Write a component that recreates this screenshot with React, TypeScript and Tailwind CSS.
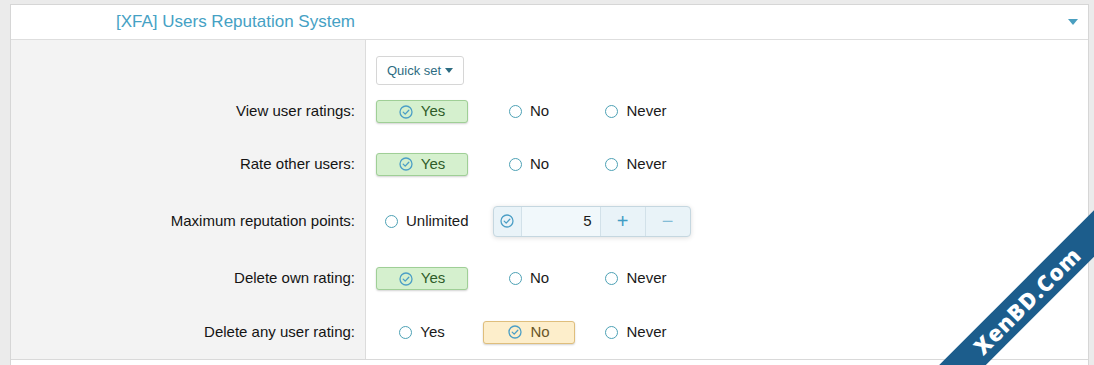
import type { ReactNode } from 'react'

function CheckCircle() {
  return (
    <svg width="14" height="14" viewBox="0 0 14 14" fill="none" className="shrink-0">
      <circle cx="7" cy="7" r="6" stroke="#4c9fc6" strokeWidth="1.3" />
      <path d="M4.2 7.1 L6.2 9.1 L9.8 5.2" stroke="#4c9fc6" strokeWidth="1.3" strokeLinecap="round" strokeLinejoin="round" />
    </svg>
  )
}

function Radio() {
  return <span className="h-[13px] w-[13px] shrink-0 rounded-full border-[1.5px] border-[#4da1b5] bg-white" />
}

type Opt = { text: string; state?: 'green' | 'orange' }

function Option({ text, state }: Opt) {
  const tone =
    state === 'green'
      ? 'border-[#9fcf96] bg-[#d5f0ce] text-[#2f5c2a] shadow-[0_1px_2px_rgba(0,0,0,0.18)]'
      : state === 'orange'
        ? 'border-[#dfbe7c] bg-[#fdeecb] text-[#6a5628] shadow-[0_1px_2px_rgba(0,0,0,0.18)]'
        : 'border-transparent text-[#1a1a1a]'
  return (
    <span className={`inline-flex h-[23px] min-w-[92px] items-center justify-center gap-2 rounded-[3px] border px-2 ${tone}`}>
      {state ? <CheckCircle /> : <Radio />}
      <span>{text}</span>
    </span>
  )
}

function Row({ label, h, children }: { label: string; h: string; children: ReactNode }) {
  return (
    <div className={`flex ${h}`}>
      <div className="flex w-[355px] shrink-0 items-center justify-end border-r border-[#dcdcdc] bg-[#f3f3f3] pr-[10px] text-[15px] text-[#141414]">
        {label}
      </div>
      <div className="flex items-center gap-[15px] pl-[10px] text-[15px]">{children}</div>
    </div>
  )
}

function Spinbox() {
  return (
    <div className="flex h-[31px] w-[198px] overflow-hidden rounded-[4px] border border-[#c5d7e0] bg-[#e9f3f8] shadow-[0_1px_5px_rgba(0,0,0,0.13)]">
      <div className="flex w-[28px] items-center justify-center border-r border-[#d2e1e9]">
        <CheckCircle />
      </div>
      <div className="flex w-[79px] items-center justify-end border-r border-[#d2e1e9] bg-[#f1f8fb] pr-[8px] text-[#1a1a1a]">5</div>
      <div className="flex w-[45px] items-center justify-center border-r border-[#d2e1e9] text-[20px] leading-none text-[#3f9cc4]">+</div>
      <div className="flex flex-1 items-center justify-center text-[20px] leading-none text-[#84bcd6]">−</div>
    </div>
  )
}

export default function App() {
  return (
    <div className="relative h-[365px] w-[1094px] overflow-hidden bg-[#ebebeb] pl-[10px] pr-[5px] pt-[4px] font-['Liberation_Sans',Arial,sans-serif]">
      <div className="border border-[#d6d6d6] bg-white">
        <div className="flex h-[35px] items-center border-b border-[#dedede]">
          <div className="w-[355px] pr-[11px] text-right text-[17px] text-[#45a1c4]">[XFA] Users Reputation System</div>
          <div className="flex flex-1 justify-end pr-[10px]">
            <svg width="10" height="6" viewBox="0 0 10 6">
              <path d="M0 0 H10 L5 6 Z" fill="#4a9fc0" />
            </svg>
          </div>
        </div>

        <div className="border-b border-[#d9d9d9]">
          <div className="flex h-[45px]">
            <div className="w-[355px] shrink-0 border-r border-[#dcdcdc] bg-[#f3f3f3]" />
            <div className="pl-[10px] pt-[16px]">
              <button className="flex h-[29px] items-center gap-[4px] rounded-[3px] border border-[#d6d6d6] bg-white px-[10px] text-[13px] text-[#2d6c82]">
                Quick set
                <svg width="8" height="5" viewBox="0 0 8 5">
                  <path d="M0 0 H8 L4 5 Z" fill="#2d6c82" />
                </svg>
              </button>
            </div>
          </div>

          <Row label="View user ratings:" h="h-[53px]">
            <Option text="Yes" state="green" />
            <Option text="No" />
            <Option text="Never" />
          </Row>
          <Row label="Rate other users:" h="h-[52px]">
            <Option text="Yes" state="green" />
            <Option text="No" />
            <Option text="Never" />
          </Row>
          <Row label="Maximum reputation points:" h="h-[62px]">
            <Option text="Unlimited" />
            <Spinbox />
          </Row>
          <Row label="Delete own rating:" h="h-[53px]">
            <Option text="Yes" state="green" />
            <Option text="No" />
            <Option text="Never" />
          </Row>
          <Row label="Delete any user rating:" h="h-[54px]">
            <Option text="Yes" />
            <Option text="No" state="orange" />
            <Option text="Never" />
          </Row>
        </div>
        <div className="h-[20px] bg-white" />
      </div>

      <div className="absolute left-[827px] top-[284px] flex h-[33px] w-[400px] -rotate-45 items-center justify-center bg-[#1c5d8c] font-['Open_Sans',sans-serif] text-[22px] font-extrabold tracking-[1px] text-white">
        XenBD.Com
      </div>
    </div>
  )
}
